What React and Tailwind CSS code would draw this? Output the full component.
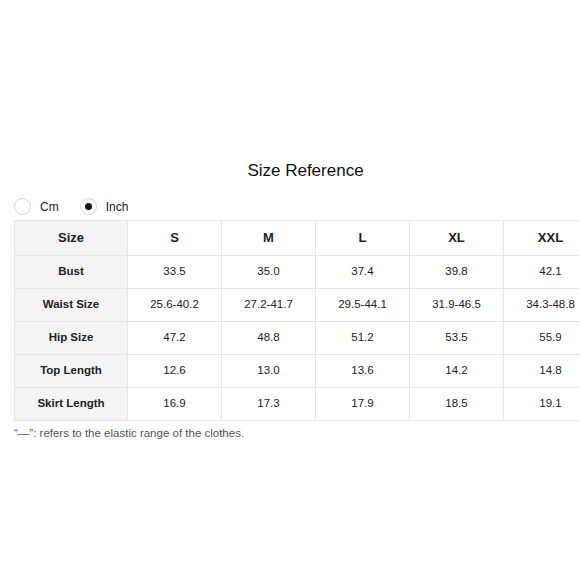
import React from "react";

const sizes = ["S", "M", "L", "XL", "XXL"];

const rows = [
  { label: "Bust", values: ["33.5", "35.0", "37.4", "39.8", "42.1"] },
  { label: "Waist Size", values: ["25.6-40.2", "27.2-41.7", "29.5-44.1", "31.9-46.5", "34.3-48.8"] },
  { label: "Hip Size", values: ["47.2", "48.8", "51.2", "53.5", "55.9"] },
  { label: "Top Length", values: ["12.6", "13.0", "13.6", "14.2", "14.8"] },
  { label: "Skirt Length", values: ["16.9", "17.3", "17.9", "18.5", "19.1"] }
];

// Radio option
function Radio({ label, checked = false }) {
  return (
    <div className="flex items-center">
      <span className="flex h-[17px] w-[17px] items-center justify-center rounded-full border border-[#d6d6d6] bg-white">
        {checked && <span className="h-[7px] w-[7px] rounded-full bg-[#111]" />}
      </span>
      <span className="ml-[9px] text-[12px] text-[#222]">{label}</span>
    </div>
  );
}

export default function App() {
  return (
    <div
      className="h-[580px] w-[580px] overflow-hidden bg-white pt-[161px]"
      style={{ fontFamily: '"Liberation Sans", Arial, sans-serif' }}
    >
      <div className="ml-[14px] w-[583px]">
        {/* Title */}
        <h1 className="text-center text-[17px] leading-[20px] text-[#111]">Size Reference</h1>

        {/* Unit switch */}
        <div className="mt-[17px] flex h-[17px] items-center gap-[21px]">
          <Radio label="Cm" />
          <Radio label="Inch" checked />
        </div>

        {/* Size table */}
        <table className="mt-[5px] w-[583px] table-fixed border-collapse text-[#222]">
          <colgroup>
            <col className="w-[113px]" />
            <col className="w-[94px]" />
            <col className="w-[94px]" />
            <col className="w-[94px]" />
            <col className="w-[94px]" />
            <col className="w-[94px]" />
          </colgroup>
          <thead>
            <tr className="h-[35px]">
              <th className="border border-[#e6e6e6] bg-[#f4f4f4] text-[13px] font-bold">Size</th>
              {sizes.map((s) => (
                <th key={s} className="border border-[#e6e6e6] text-[13px] font-bold">
                  {s}
                </th>
              ))}
            </tr>
          </thead>
          <tbody>
            {rows.map((row) => (
              <tr key={row.label} className="h-[33px]">
                <td className="border border-[#e6e6e6] bg-[#f4f4f4] text-center text-[11.5px] font-bold">
                  {row.label}
                </td>
                {row.values.map((v, i) => (
                  <td key={i} className="border border-[#e6e6e6] text-center text-[11.5px]">
                    {v}
                  </td>
                ))}
              </tr>
            ))}
          </tbody>
        </table>

        {/* Note */}
        <p className="mt-[5px] text-[11.5px] leading-[14px] text-[#555]">
          “—”: refers to the elastic range of the clothes.
        </p>
      </div>
    </div>
  );
}
